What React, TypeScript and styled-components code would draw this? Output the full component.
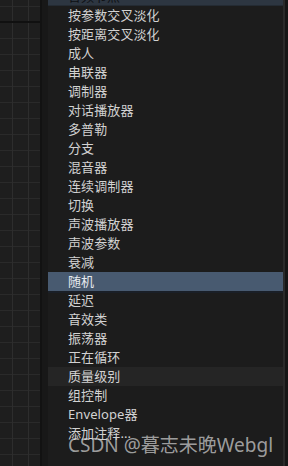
import styled, { createGlobalStyle } from "styled-components";

const GlobalStyle = createGlobalStyle`
  html, body {
    margin: 0;
    padding: 0;
    background: #161616;
    font-family: "Noto Sans", "Noto Sans CJK SC", sans-serif;
  }
`;

const Screen = styled.div`
  position: relative;
  display: flex;
  width: 288px;
  height: 466px;
  overflow: hidden;
  background: #161616;
`;

const Canvas = styled.div`
  width: 40px;
  height: 100%;
  background-color: #1e1e1e;
  background-image:
    linear-gradient(to bottom, transparent 21px, #101010 21px, #101010 23px, transparent 23px),
    repeating-linear-gradient(to right, transparent 0 12px, #2d2d2d 12px 13px, transparent 13px 16px),
    repeating-linear-gradient(to bottom, transparent 0 6px, #2a2a2a 6px 7px, transparent 7px 16px);
`;

const Gutter = styled.div`
  width: 8px;
  height: 100%;
  background: #181818;
  border-left: 2px solid #121212;
  box-sizing: border-box;
`;

const Panel = styled.div`
  display: flex;
  flex-direction: column;
  width: 237px;
  height: 100%;
  background: #1c1c1c;
  border-right: 2px solid #2a2a2a;
  box-sizing: border-box;
`;

const Header = styled.div`
  height: 6px;
  overflow: hidden;
  background: #2d3641;
  border-bottom: 1px solid #242b33;
  box-sizing: border-box;
  span {
    display: block;
    margin-top: -13px;
    padding-left: 20px;
    font-size: 13px;
    line-height: 19px;
    color: #0e1014;
  }
`;

const Item = styled.div<{ $state?: "selected" | "hover" }>`
  height: 19px;
  line-height: 19px;
  padding-left: 20px;
  font-size: 13px;
  letter-spacing: 0.1px;
  color: ${(p) => (p.$state === "selected" ? "#e6e9ee" : "#d2d2d2")};
  white-space: nowrap;
  background: ${(p) =>
    p.$state === "selected" ? "#485a70" : p.$state === "hover" ? "#252525" : "transparent"};
  box-shadow: ${(p) => (p.$state === "selected" ? "0 2px 0 #1a1f27" : "none")};
  position: relative;
`;

const Watermark = styled.div`
  position: absolute;
  left: 68px;
  top: 433px;
  font-size: 19px;
  line-height: 24px;
  color: rgba(215, 215, 215, 0.7);
  white-space: nowrap;
`;

const items = [
  "按参数交叉淡化",
  "按距离交叉淡化",
  "成人",
  "串联器",
  "调制器",
  "对话播放器",
  "多普勒",
  "分支",
  "混音器",
  "连续调制器",
  "切换",
  "声波播放器",
  "声波参数",
  "衰减",
  "随机",
  "延迟",
  "音效类",
  "振荡器",
  "正在循环",
  "质量级别",
  "组控制",
  "Envelope器",
  "添加注释...",
];

export default function App() {
  return (
    <Screen>
      <GlobalStyle />
      <Canvas />
      <Gutter />
      <Panel>
        <Header>
          <span>音频节点</span>
        </Header>
        {items.map((label) => (
          <Item
            key={label}
            $state={label === "随机" ? "selected" : label === "质量级别" ? "hover" : undefined}
          >
            {label}
          </Item>
        ))}
      </Panel>
      <Watermark>CSDN @暮志未晚Webgl</Watermark>
    </Screen>
  );
}
